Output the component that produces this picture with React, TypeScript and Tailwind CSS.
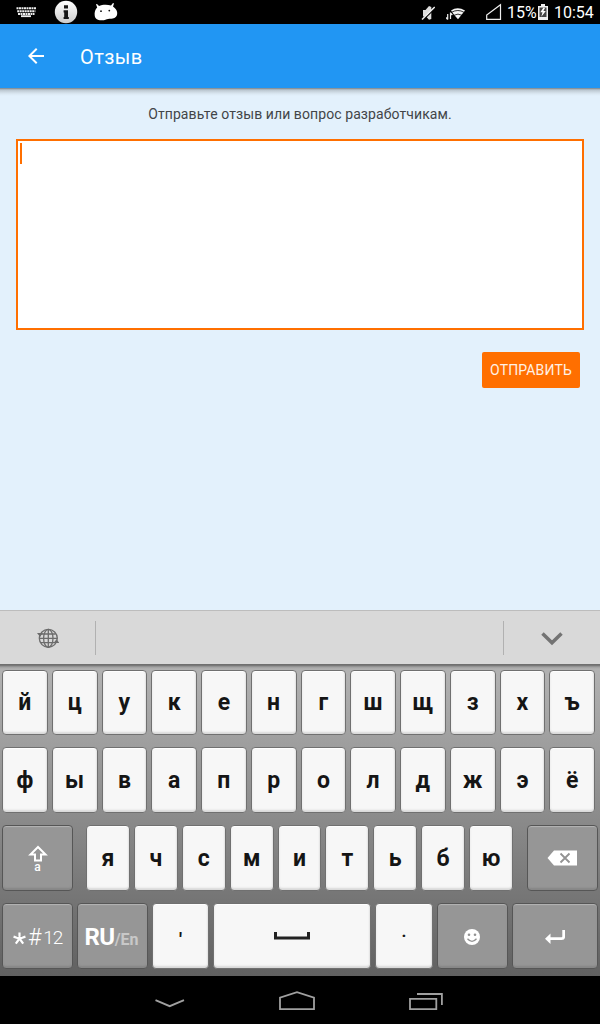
import React from "react";

const FONT = "font-['Roboto','Noto_Sans',sans-serif]";

function Key({ children, className = "", dark = false }: { children?: React.ReactNode; className?: string; dark?: boolean }) {
  const tone = dark
    ? "bg-[#969696] border-[#565656] text-white shadow-[inset_0_1px_1px_#b4b4b4,inset_0_-2px_2px_#868686]"
    : "bg-[#f7f7f7] border-[#707070] text-[#151515] shadow-[inset_0_1px_1px_#ffffff,inset_0_-2px_2px_#d8d8d8,inset_-1px_0_1px_#e6e6e6]";
  return (
    <div className={`flex h-full items-center justify-center rounded-[4px] border text-[23px] font-bold ${tone} ${className}`}>
      {children}
    </div>
  );
}

function LetterRow({ letters, className = "" }: { letters: string[]; className?: string }) {
  return (
    <div className={`flex gap-1 pr-[5px] pl-[2px] ${className}`}>
      {letters.map((l) => (
        <Key key={l} className="min-w-0 flex-1">
          <span className="pt-[2px]">{l}</span>
        </Key>
      ))}
    </div>
  );
}

function StatusBar() {
  return (
    <div className="flex h-6 shrink-0 items-center bg-black text-white">
      <svg className="ml-4 h-6 w-5" viewBox="0 0 20 24" fill="none" stroke="#eee">
        <path d="M.5 8.2H20M1.2 11.200H19.400M2 13.900H18.500" strokeWidth="2" strokeDasharray="2 .5" />
        <path d="M5 16.200h10" strokeWidth="1.800" />
      </svg>
      <svg className="ml-[18px] h-6 w-6" viewBox="0 0 24 24">
        <defs>
          <linearGradient id="badge" x1="0" y1="0" x2="0" y2="1">
            <stop offset="0" stopColor="#fff" />
            <stop offset="1" stopColor="#ccc" />
          </linearGradient>
        </defs>
        <circle cx="12" cy="12" r="11.200" fill="url(#badge)" />
        <path d="M10 5.200h4v3.300h-4zM9.600 10.200H14v6.800h.8v2H9.600V17h.6v-4.600h-.6z" fill="#161616" />
      </svg>
      <svg className="ml-4 h-6 w-6" viewBox="0 0 24 24">
        <path d="M2 4.300l1-.4 2 2C8 4.600 13 4.400 17 5.400L19 3l1 .6-1 2.800c3 2 4.600 5 4.200 7.600-.3 2.500-2 4.200-4.500 4.500-2 .3-3.200.2-4.600.4-1.800.300-3.600 1.600-6.600 1.400C3 20.100 1 18.500.7 15.500.300 12.500 1.200 9.200 3.200 7.500z" fill="#fff" />
        <circle cx="7" cy="11.200" r=".9" fill="#111" />
        <circle cx="15.300" cy="10.600" r=".9" fill="#111" />
      </svg>
      <svg className="ml-[303px] h-6 w-[14px]" viewBox="0 0 14 24">
        <path d="M2 10h2.500L8 6l2.300 1v12l-2.300.8-3-3.300H2z" fill="#ddd" />
        <path d="M1.800 20.200L14.300 8" stroke="#000" strokeWidth="1.200" />
        <path d="M1 19.500L13.700 7" stroke="#eee" strokeWidth="1.500" />
      </svg>
      <svg className="ml-[11px] h-6 w-5" viewBox="0 0 20 24">
        <path d="M5 10.500Q11.500 5.800 19 10.500L12 19.300l-4-4.600z" fill="#f5f5f5" />
        <path d="M5.500 12.300Q12 8.700 18 12.300M8 15.300Q12 12.900 16 15.300" fill="none" stroke="#000" strokeWidth=".8" />
        <path d="M1.700 14v5.500M4.500 12.500v6.500M0 17.500l1.700 2M4.500 13l1.800 2" fill="none" stroke="#eee" strokeWidth="1.200" />
      </svg>
      <svg className="ml-[20px] h-6 w-4" viewBox="0 0 16 24">
        <path d="M.7 19.400V15L14.500 4.800v14.600z" fill="none" stroke="#eee" strokeWidth="1.200" />
      </svg>
      <span className="ml-[5px] w-[31px] text-[16px] leading-6 whitespace-nowrap pt-[1px]">15%</span>
      <svg className="h-6 w-[10px]" viewBox="0 0 10 24">
        <path d="M3 4h4v2h3v14H0V6h3z" fill="#eee" />
        <path d="M1.500 7.500h7v9.500h-7z" fill="#444" />
        <path d="M5.500 7.500L2.300 12.300h2.200l-1.200 4.400L7.800 11H5.400L7 8z" fill="#fff" />
      </svg>
      <span className="ml-[6px] text-[16px] leading-6 whitespace-nowrap pt-[1px]">10:54</span>
    </div>
  );
}

export default function App() {
  return (
    <div className={`flex h-[1024px] w-[600px] flex-col overflow-hidden bg-[#e3f1fc] ${FONT}`}>
      <StatusBar />
      <header className="flex h-16 shrink-0 items-center bg-[#2196f3] text-white">
        <svg className="ml-6 h-6 w-6" viewBox="0 0 24 24" fill="#fff">
          <path d="M20 11H7.830l5.590-5.590L12 4l-8 8 8 8 1.410-1.410L7.830 13H20z" />
        </svg>
        <h1 className="ml-8 pt-[2px] text-[20px] tracking-[0.400px]">Отзыв</h1>
      </header>
      <main className="flex h-[522px] shrink-0 flex-col">
        <div className="h-2 shrink-0 bg-[linear-gradient(#777f86_0px,#9ba7af_1px,#bac6cf_2px,#cdd9e2_4px,#dce9f3_6px,#e3f1fc_8px)]" />
        <p className="mt-2 h-5 text-center text-[14px] leading-5 tracking-[0.090px] text-[#424548]">Отправьте отзыв или вопрос разработчикам.</p>
        <div className="mx-4 mt-[15px] h-[191px] shrink-0 border-2 border-[#ff6f00] bg-white pt-[2px] pl-[2px]">
          <div className="h-[21px] w-[2px] bg-[#ff6f00]" />
        </div>
        <button className="mt-[22px] mr-5 h-9 w-[98px] self-end rounded-[2px] bg-[#ff6f00] text-[14px] tracking-[0.150px] text-[#fff1e5]">ОТПРАВИТЬ</button>
      </main>
      <div className="flex h-[54px] shrink-0 items-center border-t border-[#bdbdbd] bg-[#d9d9d9]">
        <div className="flex h-[34px] w-24 items-center justify-center border-r border-[#b1b1b1]">
          <svg className="h-[22px] w-[22px]" viewBox="0 0 22 22" fill="none" stroke="#6c6c6c" strokeWidth="1.300">
            <circle cx="11.300" cy="11.300" r="9" />
            <ellipse cx="11.300" cy="11.300" rx="4.700" ry="9" />
            <path d="M11.300 2.300v18M2.300 11.300h18M4 7h14.600M4 15.600h14.600" />
            <path d="M0 6h6L3 9.700zM22.500 16h-6l3-3.700z" fill="#6c6c6c" stroke="none" />
          </svg>
        </div>
        <div className="h-[34px] w-[408px] border-r border-[#b1b1b1]" />
        <div className="flex flex-1 justify-center">
          <svg className="h-6 w-6" viewBox="0 0 24 24" fill="none">
            <path d="M2.500 7.500L12 16.800l9.500-9.300" stroke="#737373" strokeWidth="3.500" />
          </svg>
        </div>
      </div>
      <div className="flex h-[312px] shrink-0 flex-col bg-[linear-gradient(#747474_0px,#6c6c6c_1px,#a0a0a0_3px,#b2b2b2_5px,#616161_312px)] pt-[6px]">
        <LetterRow className="h-[65px]" letters={["й", "ц", "у", "к", "е", "н", "г", "ш", "щ", "з", "х", "ъ"]} />
        <LetterRow className="mt-3 h-[66px]" letters={["ф", "ы", "в", "а", "п", "р", "о", "л", "д", "ж", "э", "ё"]} />
        <div className="mt-3 flex h-[66px] pl-[2px]">
          <Key dark className="w-[71px]">
            <div className="flex flex-col items-center pt-[3px]">
              <svg className="h-[17px] w-5" viewBox="0 0 20 17" fill="none" stroke="#fff" strokeWidth="2">
                <path d="M10 2L2.500 9.500H7V15.500h6V9.500h4.500z" />
              </svg>
              <span className="h-[12px] text-[12px] leading-[11px] font-medium">a</span>
            </div>
          </Key>
          <div className="ml-[13px] flex w-[427px] gap-1">
            {["я", "ч", "с", "м", "и", "т", "ь", "б", "ю"].map((l) => (
              <Key key={l} className="min-w-0 flex-1"><span className="pt-[2px]">{l}</span></Key>
            ))}
          </div>
          <Key dark className="ml-[14px] w-[71px]">
            <svg className="mr-[2px] h-4 w-[30px]" viewBox="0 0 30 16">
              <path d="M7 .5h23v15H7L.5 8z" fill="#fff" />
              <path d="M13.500 3.500l9 9m0-9l-9 9" stroke="#929292" strokeWidth="1.800" />
            </svg>
          </Key>
        </div>
        <div className="mt-3 flex h-[66px] gap-1 pl-[2px]">
          <Key dark className="w-[71px]">
            <span className="flex items-center pt-1 font-normal">
              <svg className="mr-[2px] h-[13px] w-[13px]" viewBox="0 0 12 12" stroke="#fff" strokeWidth="2">
                <path d="M6 .5V6M.5 4.300L6 6l5.500-1.700M6 6L2.600 10.700M6 6l3.400 4.700" />
              </svg>
              <span className="text-[23px] leading-6 font-light">#</span>
              <span className="ml-[2px] text-[19px] leading-6 font-light tracking-[-1.200px]">12</span>
            </span>
          </Key>
          <Key dark className="w-[71px]">
            <span className="flex items-baseline pt-[2px] pr-[2px]">
              <span className="text-[24px] tracking-[-0.500px]">RU</span>
              <span className="text-[16px] text-[#c8c8c8]">/En</span>
            </span>
          </Key>
          <Key className="w-[57px]"><span className="pt-[9px] text-[19px]">'</span></Key>
          <Key className="w-[158px]">
            <svg className="h-2 w-9" viewBox="0 0 36 8" fill="none" stroke="#222" strokeWidth="3">
              <path d="M1.500 0v6h33V0" />
            </svg>
          </Key>
          <Key className="w-[58px]"><span className="pb-[9px] text-[17px]">.</span></Key>
          <Key dark className="w-[71px]">
            <svg className="mt-[2px] mr-[1px] h-4 w-4" viewBox="0 0 16 16">
              <circle cx="8" cy="8" r="8" fill="#fff" />
              <circle cx="5" cy="5.800" r="1.300" fill="#929292" />
              <circle cx="11" cy="5.800" r="1.300" fill="#929292" />
              <path d="M3.500 9.800Q8 15 12.500 9.800" fill="none" stroke="#929292" strokeWidth="1.300" />
            </svg>
          </Key>
          <Key dark className="w-[86px]">
            <svg className="mt-[2px] mr-[1px] h-[14px] w-5" viewBox="0 0 20 14">
              <path d="M18.700 0v6.500q0 2.200-2.200 2.200H4" fill="none" stroke="#fff" strokeWidth="2.800" />
              <path d="M5.500 3.500v10.500L0 8.700z" fill="#fff" />
            </svg>
          </Key>
        </div>
      </div>
      <nav className="flex h-12 shrink-0 bg-black">
        <svg className="h-12 w-[600px]" viewBox="0 0 600 48" fill="none" stroke="#a0a0a0" strokeWidth="1.800">
          <path d="M155.500 24.200l14.200 6L184 24.200" />
          <path d="M280 33.200V21.700L297 16.200l17 5.500v11.500z" />
          <path d="M410 22.800h26.300v10.400H410zM417 18h24.900v11" />
        </svg>
      </nav>
    </div>
  );
}
